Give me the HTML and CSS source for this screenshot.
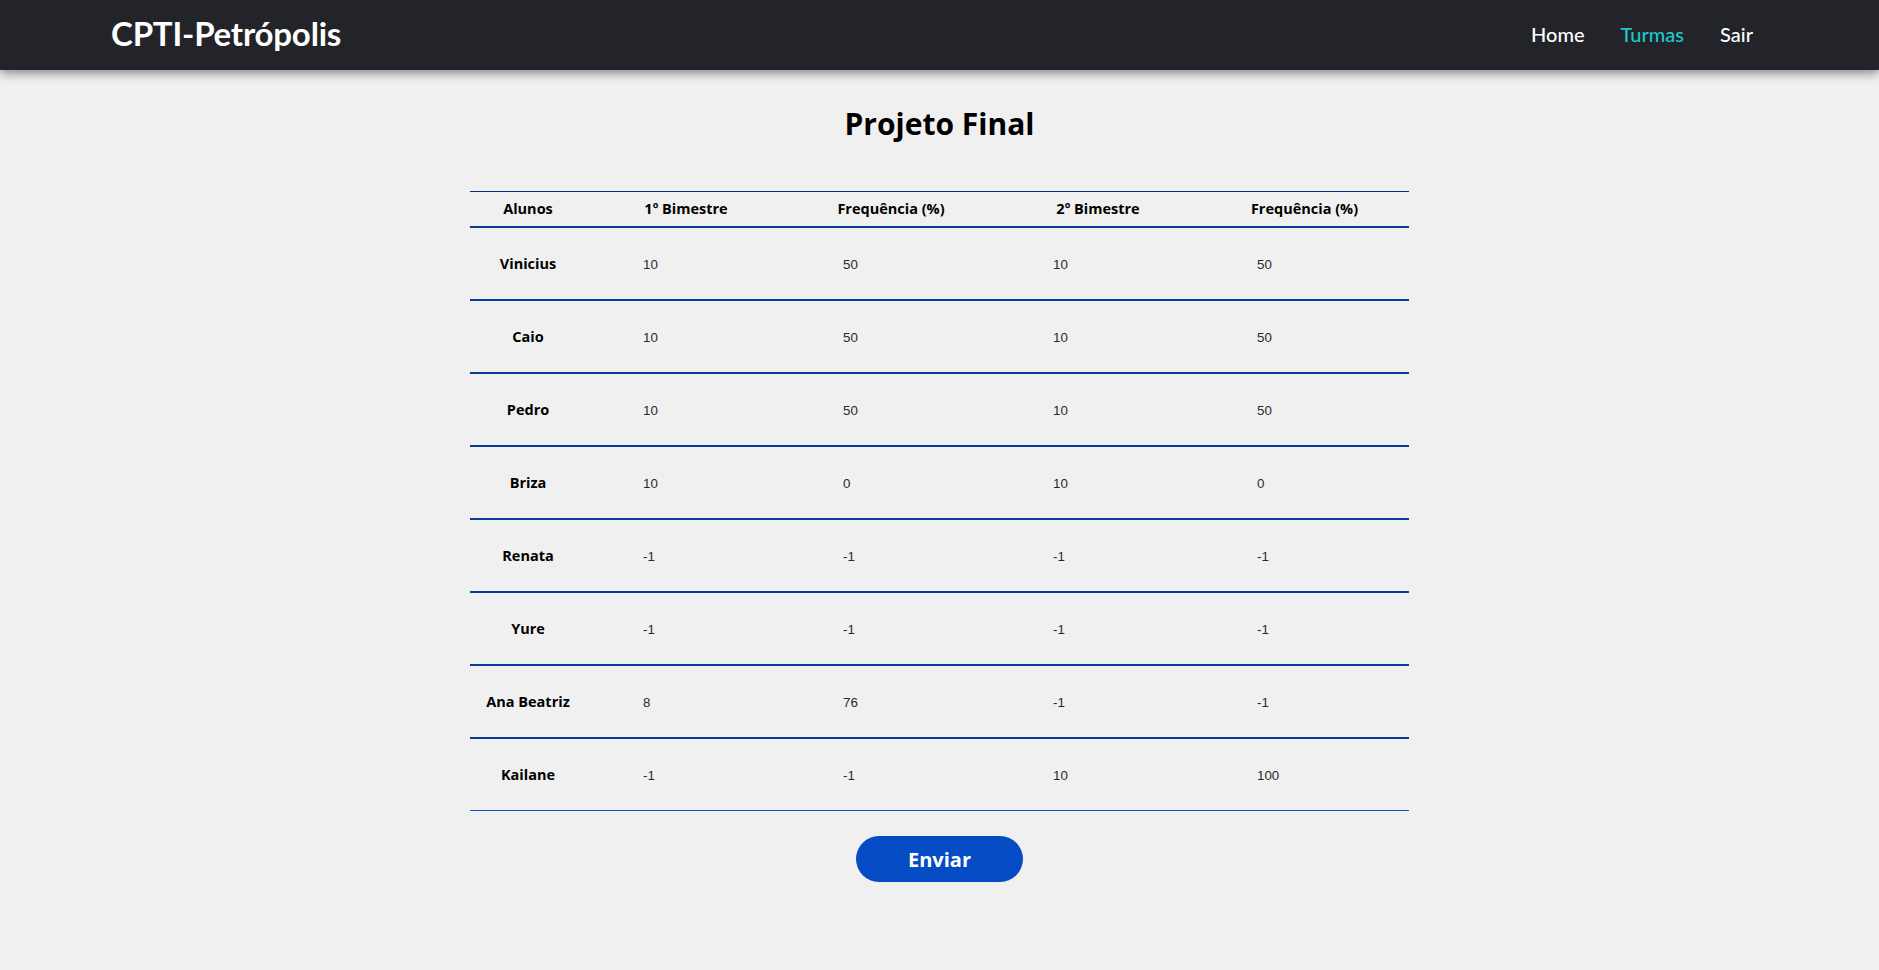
FILE: index.html
```html
<!DOCTYPE html>
<html lang="pt-BR">
<head>
<meta charset="utf-8">
<title>Projeto Final</title>
<link rel="stylesheet" href="styles.css">
</head>
<body>
<header class="topbar">
  <div class="brand">CPTI-Petrópolis</div>
  <nav class="nav">
    <a class="nav-link" href="#">Home</a>
    <a class="nav-link active" href="#">Turmas</a>
    <a class="nav-link" href="#">Sair</a>
  </nav>
</header>
<main class="content">
  <h1 class="title">Projeto Final</h1>
  <form class="grades">
    <table class="grade-table">
      <colgroup>
        <col class="c1"><col class="c2"><col class="c3"><col class="c4"><col class="c5">
      </colgroup>
      <thead>
        <tr><th>Alunos</th><th>1º Bimestre</th><th>Frequência (%)</th><th>2º Bimestre</th><th>Frequência (%)</th></tr>
      </thead>
      <tbody>
        <tr><td class="name">Vinicius</td><td><input class="val" value="10"></td><td><input class="val" value="50"></td><td><input class="val" value="10"></td><td><input class="val" value="50"></td></tr>
        <tr><td class="name">Caio</td><td><input class="val" value="10"></td><td><input class="val" value="50"></td><td><input class="val" value="10"></td><td><input class="val" value="50"></td></tr>
        <tr><td class="name">Pedro</td><td><input class="val" value="10"></td><td><input class="val" value="50"></td><td><input class="val" value="10"></td><td><input class="val" value="50"></td></tr>
        <tr><td class="name">Briza</td><td><input class="val" value="10"></td><td><input class="val" value="0"></td><td><input class="val" value="10"></td><td><input class="val" value="0"></td></tr>
        <tr><td class="name">Renata</td><td><input class="val" value="-1"></td><td><input class="val" value="-1"></td><td><input class="val" value="-1"></td><td><input class="val" value="-1"></td></tr>
        <tr><td class="name">Yure</td><td><input class="val" value="-1"></td><td><input class="val" value="-1"></td><td><input class="val" value="-1"></td><td><input class="val" value="-1"></td></tr>
        <tr><td class="name">Ana Beatriz</td><td><input class="val" value="8"></td><td><input class="val" value="76"></td><td><input class="val" value="-1"></td><td><input class="val" value="-1"></td></tr>
        <tr class="last"><td class="name">Kailane</td><td><input class="val" value="-1"></td><td><input class="val" value="-1"></td><td><input class="val" value="10"></td><td><input class="val" value="100"></td></tr>
      </tbody>
    </table>
    <div class="actions"><button type="button" class="submit">Enviar</button></div>
  </form>
</main>
</body>
</html>
```
FILE: styles.css
```css
* { box-sizing: border-box; }
html, body { margin: 0; padding: 0; }
body {
  background: #f0f0f0;
  font-family: "Open Sans", "Noto Sans", sans-serif;
  color: #000;
  min-height: 970px;
}
.topbar {
  height: 70px;
  background: #232429;
  display: flex;
  align-items: center;
  justify-content: space-between;
  padding: 0 126px 0 111px;
  box-shadow: 0 3px 10px rgba(0, 0, 0, 0.45);
  position: relative;
  z-index: 1;
}
.brand {
  font-family: Lato, "Noto Sans", sans-serif;
  font-weight: 700;
  font-size: 33px;
  color: #fff;
  letter-spacing: -0.2px;
  line-height: 1;
  margin-top: -3px;
}
.nav { display: flex; gap: 36px; align-items: center; margin-top: -2px; }
.nav-link {
  font-family: Lato, "Noto Sans", sans-serif;
  font-size: 20px;
  color: #fff;
  text-decoration: none;
  font-weight: 500;
}
.nav-link.active { color: #1fc8cc; }
.content { display: flex; flex-direction: column; align-items: center; }
.title {
  font-size: 30px;
  font-weight: 700;
  margin: 34px 0 47px;
  line-height: 40px;
}
.grades { width: 939px; display: flex; flex-direction: column; }
.grade-table {
  width: 939px;
  border-collapse: collapse;
  table-layout: fixed;
}
.c1 { width: 116px; }
.c2 { width: 200px; }
.c3 { width: 210px; }
.c4 { width: 204px; }
.c5 { width: 209px; }
.grade-table thead tr { border-top: 1px solid #0a2a78; border-bottom: 2px solid #0a3a9a; }
.grade-table th {
  height: 35px;
  font-size: 14.5px;
  font-weight: 700;
  text-align: center;
  padding: 0;
}
.grade-table tbody tr { border-bottom: 2px solid #0a3a9a; }
.grade-table tbody tr.last { border-bottom: 1px solid #1450c8; }
.grade-table td { height: 73px; padding: 0; }
.grade-table td.name {
  text-align: center;
  font-size: 14.5px;
  font-weight: 700;
}
.val {
  border: none;
  background: transparent;
  font-family: "Liberation Sans", Arial, sans-serif;
  font-size: 13.33px;
  color: #2a2a2a;
  width: 100px;
  padding: 0;
  margin-left: 57px;
  outline: none;
}
.actions { display: flex; justify-content: center; padding-top: 25px; }
.submit {
  width: 167px;
  height: 46px;
  border: none;
  border-radius: 23px;
  background: #044bc4;
  color: #fff;
  font-family: "Open Sans", "Noto Sans", sans-serif;
  font-weight: 700;
  font-size: 20px;
  cursor: pointer;
}
```
